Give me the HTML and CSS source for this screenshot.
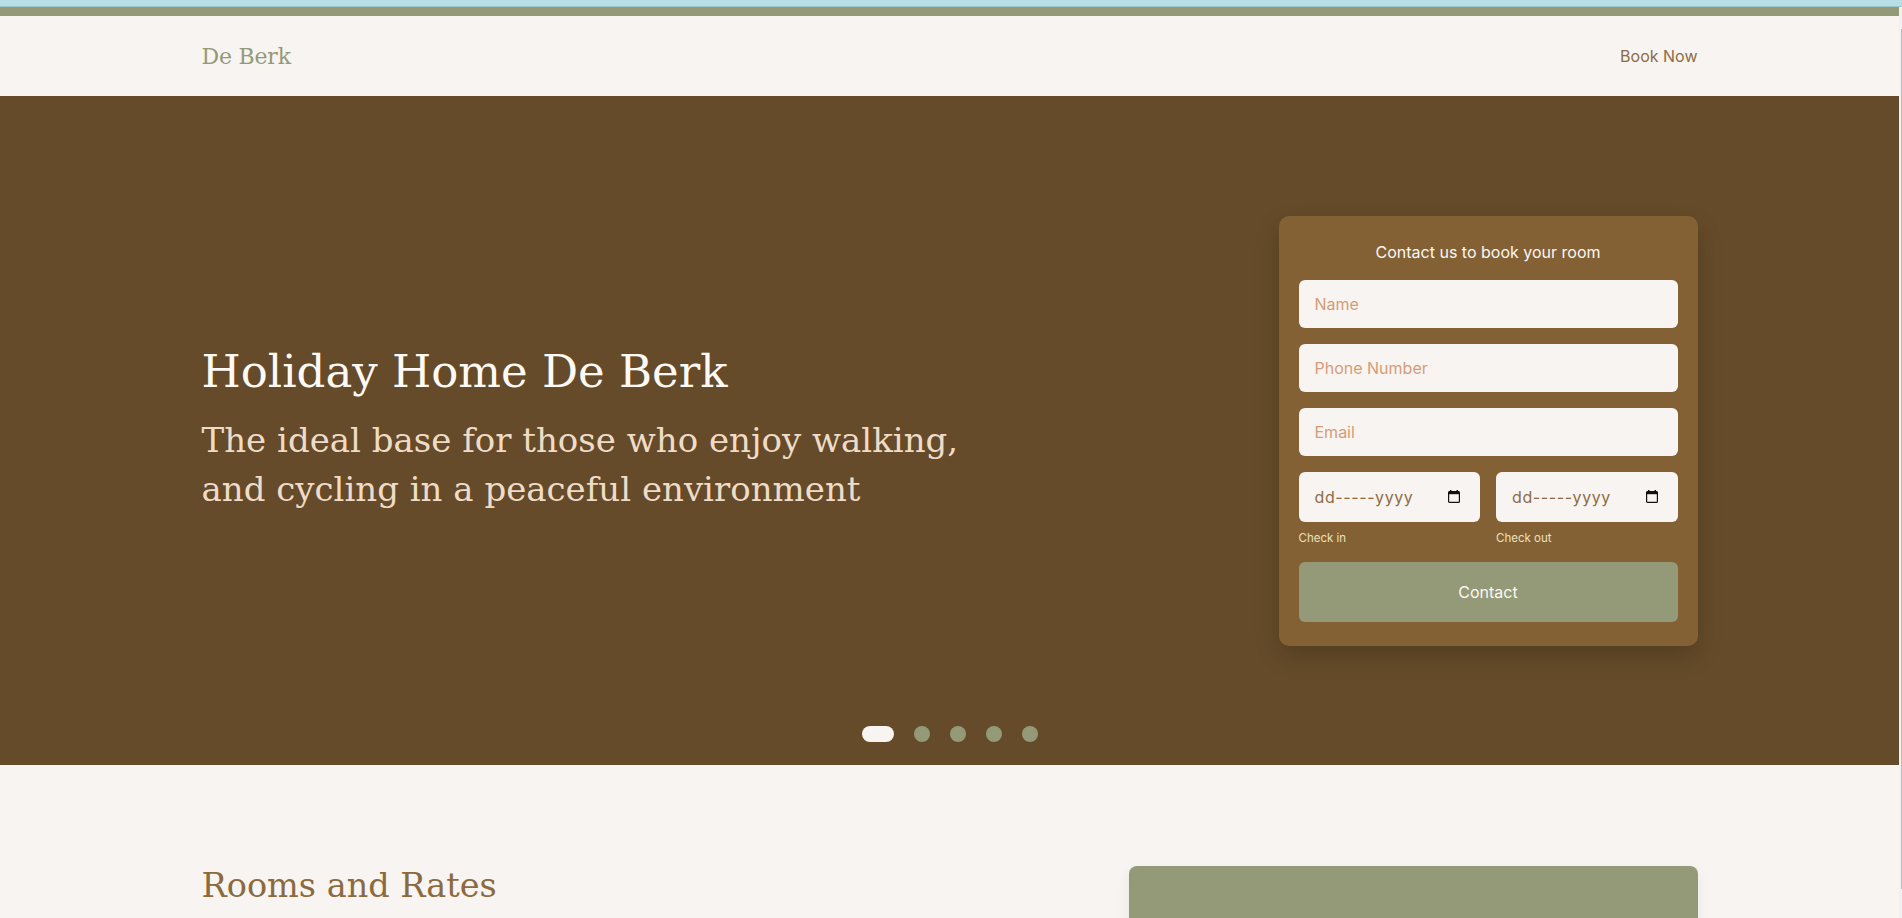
FILE: index.html
```html
<!DOCTYPE html>
<html lang="en">
<head>
<meta charset="utf-8">
<title>Holiday Home De Berk</title>
<link rel="stylesheet" href="styles.css">
</head>
<body>
<div class="browser-strip"></div>
<div class="frame">
  <div class="viewport">
    <div class="top-band"></div>
    <header class="site-header">
      <div class="container header-inner">
        <a class="logo" href="#">De Berk</a>
        <a class="nav-link" href="#">Book Now</a>
      </div>
    </header>

    <section class="hero">
      <div class="container hero-inner">
        <div class="hero-text">
          <h1 class="hero-title">Holiday Home De Berk</h1>
          <p class="hero-sub">The ideal base for those who enjoy walking, and cycling in a peaceful environment</p>
        </div>
        <form class="booking-card">
          <h2 class="card-title">Contact us to book your room</h2>
          <input class="field" type="text" placeholder="Name">
          <input class="field" type="text" placeholder="Phone Number">
          <input class="field" type="text" placeholder="Email">
          <div class="date-row">
            <div class="date-col">
              <div class="date-field">
                <span class="date-text">dd-----yyyy</span>
                <svg class="cal-icon" viewBox="0 0 12 13" width="12" height="13" aria-hidden="true">
                  <rect x="2" y="0" width="1.5" height="2" fill="#111"/>
                  <rect x="8.5" y="0" width="1.5" height="2" fill="#111"/>
                  <rect x="0.6" y="1.6" width="10.8" height="10.8" rx="1" fill="none" stroke="#111" stroke-width="1.2"/>
                  <rect x="0.6" y="1.6" width="10.8" height="2.6" fill="#111"/>
                </svg>
              </div>
              <span class="date-label">Check in</span>
            </div>
            <div class="date-col">
              <div class="date-field">
                <span class="date-text">dd-----yyyy</span>
                <svg class="cal-icon" viewBox="0 0 12 13" width="12" height="13" aria-hidden="true">
                  <rect x="2" y="0" width="1.5" height="2" fill="#111"/>
                  <rect x="8.5" y="0" width="1.5" height="2" fill="#111"/>
                  <rect x="0.6" y="1.6" width="10.8" height="10.8" rx="1" fill="none" stroke="#111" stroke-width="1.2"/>
                  <rect x="0.6" y="1.6" width="10.8" height="2.6" fill="#111"/>
                </svg>
              </div>
              <span class="date-label">Check out</span>
            </div>
          </div>
          <button class="submit" type="button">Contact</button>
        </form>
      </div>
      <div class="dots">
        <span class="dot active"></span>
        <span class="dot"></span>
        <span class="dot"></span>
        <span class="dot"></span>
        <span class="dot"></span>
      </div>
    </section>

    <section class="rooms">
      <div class="container rooms-inner">
        <h2 class="section-title">Rooms and Rates</h2>
        <div class="rooms-card"></div>
      </div>
    </section>
  </div>
  <div class="scrollbar"><div class="scroll-thumb"></div></div>
</div>
</body>
</html>
```

FILE: styles.css
```css
* { box-sizing: border-box; }

html, body {
  margin: 0;
  padding: 0;
  background: #f1f1f1;
  font-family: Inter, "Noto Sans", sans-serif;
  overflow: hidden;
}

.browser-strip {
  height: 7px;
  background: #b6e0e5;
  border-bottom: 1px solid #9cc6cc;
}

.frame {
  display: flex;
  height: 911px;
}

.viewport {
  flex: 1;
  min-width: 0;
  overflow: hidden;
  background: #f8f4f1;
}

.scrollbar {
  width: 3px;
  background: #f1f1f1;
  padding-top: 22px;
}

.scroll-thumb {
  height: 860px;
  margin-left: 2px;
  width: 1px;
  background: #bdbdbd;
}

.container {
  max-width: 1536px;
  margin: 0 auto;
  padding: 0 20px;
}

.top-band {
  height: 9px;
  background: #949a78;
}

.site-header {
  background: #f8f4f1;
}

.header-inner {
  height: 80px;
  display: flex;
  align-items: center;
  justify-content: space-between;
}

.logo {
  font-family: "DejaVu Serif", serif;
  font-size: 22px;
  color: #949a78;
  text-decoration: none;
  letter-spacing: -0.2px;
}

.nav-link {
  font-size: 16px;
  color: #8d6c45;
  text-decoration: none;
}

.hero {
  position: relative;
  background: #654b29;
  height: 669px;
  display: flex;
  align-items: center;
}

.hero-inner {
  width: 100%;
  display: flex;
  align-items: center;
  justify-content: space-between;
}

.hero-text {
  max-width: 800px;
  margin-top: -4px;
}

.hero-title {
  margin: 0 0 16px;
  font-family: "DejaVu Serif", serif;
  font-weight: 400;
  font-size: 45px;
  line-height: 56px;
  color: #fdf9f5;
}

.hero-sub {
  margin: 0;
  font-family: "DejaVu Serif", serif;
  font-size: 34px;
  line-height: 49px;
  color: #efdcc8;
}

.booking-card {
  width: 419px;
  background: #846135;
  border-radius: 10px;
  padding: 24px 20px;
  display: flex;
  flex-direction: column;
  gap: 16px;
  box-shadow: 0 10px 25px rgba(0, 0, 0, 0.18);
}

.card-title {
  margin: 0;
  text-align: center;
  font-size: 16px;
  line-height: 24px;
  font-weight: 400;
  color: #fbf7f3;
}

.field {
  height: 48px;
  border: none;
  border-radius: 6px;
  background: #f8f4f1;
  padding: 0 16px;
  font-family: Inter, "Noto Sans", sans-serif;
  font-size: 16px;
  color: #654b29;
  outline: none;
}

.field::placeholder { color: #d49d78; }

.date-row {
  display: grid;
  grid-template-columns: 1fr 1fr;
  gap: 16px;
}

.date-col {
  display: flex;
  flex-direction: column;
  gap: 8px;
}

.date-field {
  height: 50px;
  border-radius: 6px;
  background: #f8f4f1;
  padding: 0 20px 0 16px;
  display: flex;
  align-items: center;
  justify-content: space-between;
}

.date-text {
  font-size: 16px;
  color: #8d6c45;
  letter-spacing: 0.6px;
}

.cal-icon { display: block; }

.date-label {
  font-size: 11.5px;
  line-height: 16px;
  color: #ebe2b9;
}

.submit {
  height: 60px;
  border: none;
  border-radius: 6px;
  background: #949a78;
  color: #fbf7f3;
  font-family: Inter, "Noto Sans", sans-serif;
  font-size: 16px;
  cursor: pointer;
}

.dots {
  position: absolute;
  left: 0;
  right: 0;
  bottom: 23px;
  display: flex;
  justify-content: center;
  align-items: center;
  gap: 20px;
}

.dot {
  width: 16px;
  height: 16px;
  border-radius: 8px;
  background: #949a78;
}

.dot.active {
  width: 32px;
  background: #f8f4f1;
}

.rooms {
  background: #f8f4f1;
  padding: 101px 0 80px;
}

.rooms-inner {
  display: grid;
  grid-template-columns: 1fr 569px;
  align-items: start;
}

.section-title {
  margin: 0;
  font-family: "DejaVu Serif", serif;
  font-weight: 400;
  font-size: 33.5px;
  line-height: 40px;
  color: #8b6a3e;
}

.rooms-card {
  height: 420px;
  border-radius: 8px;
  background: #949a78;
  box-shadow: 0 4px 14px rgba(0, 0, 0, 0.06);
}
```
